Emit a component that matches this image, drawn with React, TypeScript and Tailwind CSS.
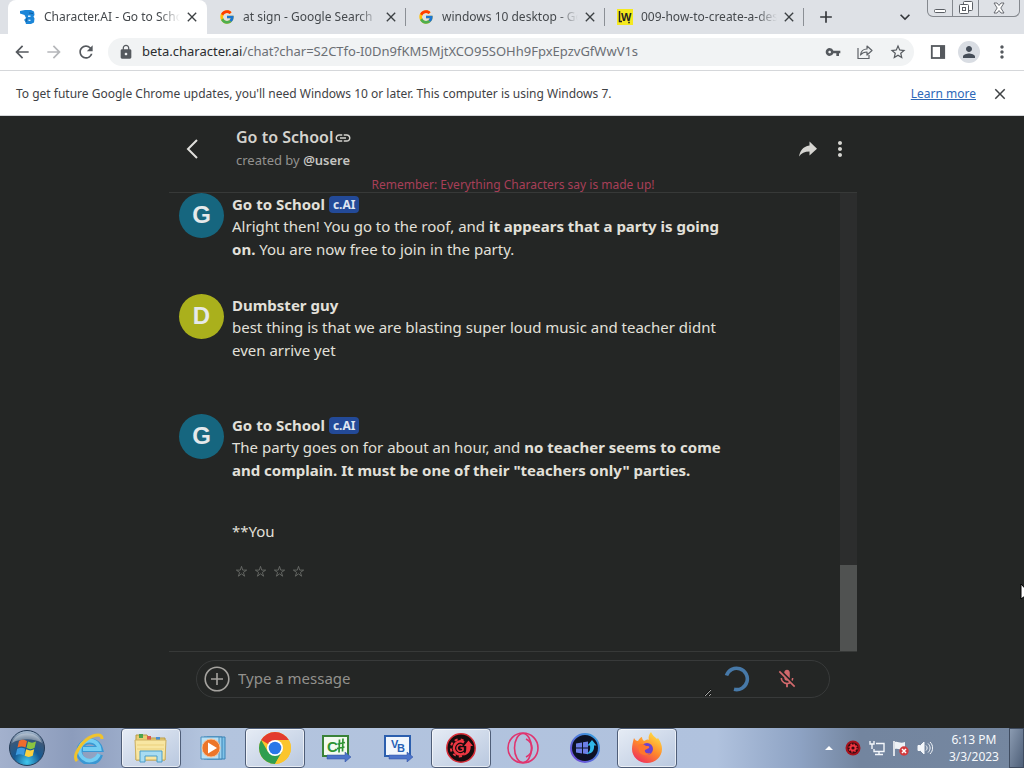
import { ReactNode } from "react";
import { FcGoogle } from "react-icons/fc";
import { IoMdShareAlt } from "react-icons/io";
import {
  MdAdd,
  MdArrowBack,
  MdArrowForward,
  MdClose,
  MdExpandMore,
  MdLink,
  MdLock,
  MdMicOff,
  MdMoreVert,
  MdPerson,
  MdRefresh,
  MdStarBorder,
  MdVpnKey,
} from "react-icons/md";

type IconProps = { className?: string };

const CharacterIcon = () => (
  <svg viewBox="0 0 16 16" className="h-4 w-4">
    <path d="M0 2l5-1h6l3 1.500.500 3.500-1 1.500 1 2-.500 4-3 1.500H6l-1-3-1-1 2-2-1.500-3L0 4.500z" fill="#1c86d8" />
    <path d="M8 6.500h2.500V8H8zM8.500 10.500l2 .300V12h-2z" fill="#d6ecfb" />
    <path d="M9 4l4 .500M6 13l1-4" stroke="#12548f" strokeWidth="0.800" />
  </svg>
);

const WikiFavicon = () => (
  <svg viewBox="0 0 16 16" className="h-4 w-4">
    <rect width="16" height="16" fill="#f5e91e" />
    <path d="M2.500 2v10.500h2.500" stroke="#222" strokeWidth="1.500" fill="none" />
    <text x="4" y="11.500" fontSize="11" fontWeight="bold" fontFamily="Liberation Sans" fill="#222">
      W
    </text>
    <circle cx="12" cy="13.500" r="0.900" fill="#222" />
  </svg>
);

const ShareIcon = () => (
  <svg viewBox="0 0 16 16" className="h-4 w-4" fill="none" stroke="#5f6368" strokeWidth="1.200">
    <path d="M1 4v10.500h11V11" />
    <path d="M3.500 11c.5-4 2.500-6 6.500-6V2l5 4.500-5 4.500V8C7 8 5 9 3.500 11z" strokeLinejoin="round" />
  </svg>
);

const SidePanelIcon = () => (
  <svg viewBox="0 0 16 16" className="h-4 w-4">
    <rect x="1.800" y="2" width="12.400" height="12" fill="none" stroke="#55595e" strokeWidth="1.800" />
    <path d="M10 2h4v12h-4z" fill="#55595e" />
  </svg>
);

const BackIcon = ({ className }: IconProps) => (
  <svg viewBox="0 0 12 20" className={className} fill="none" stroke="#e0dfdc" strokeWidth="2">
    <path d="M11 1L2 10l9 9" />
  </svg>
);

const PlusCircleIcon = ({ className }: IconProps) => (
  <svg viewBox="0 0 26 26" className={className} fill="none" stroke="#a5a39f" strokeWidth="1.600">
    <circle cx="13" cy="13" r="11.800" />
    <path d="M13 7v12M7 13h12" />
  </svg>
);

const SpinnerIcon = ({ className }: IconProps) => (
  <svg viewBox="0 0 26 26" className={className} fill="none" stroke="#4779a8" strokeWidth="3.600">
    <path d="M2.500 9.500A10.700 10.700 0 1 1 10 23.300" />
  </svg>
);

const StartOrb = () => (
  <svg viewBox="0 0 38 38" className="h-[38px] w-[38px]">
    <defs>
      <radialGradient id="orb" cx="50%" cy="90%" r="85%">
        <stop offset="0" stopColor="#41c8ee" />
        <stop offset="0.450" stopColor="#155a94" />
        <stop offset="0.800" stopColor="#3c5878" />
        <stop offset="1" stopColor="#9fb4cb" />
      </radialGradient>
    </defs>
    <circle cx="19" cy="19" r="17.500" fill="url(#orb)" stroke="#253c58" />
    <path d="M11 12c3-2 5-1.500 8 0l-1.500 6.500c-3-1.500-5-1.500-8 0z" fill="#ee6c2d" />
    <path d="M20 12.500c3 1.500 5 1.500 8 0L26.500 19c-3 1.500-5 1.500-8 0z" fill="#8bc440" />
    <path d="M9.200 19.800c3-1.500 5-1.500 8 0l-1.500 6.500c-3-1.500-5-1.500-8 0z" fill="#3c9be0" />
    <path d="M18.200 20.300c3 1.500 5 1.500 8 0l-1.500 6.500c-3 1.500-5 1.500-8 0z" fill="#fbd13f" />
    <path d="M4 14C8 1 30 1 34 14 26 9 12 9 4 14z" fill="#fff" opacity="0.350" />
  </svg>
);

const ExplorerEIcon = () => (
  <svg viewBox="0 0 32 32" className="h-8 w-8" fill="none">
    <path d="M27 22.500A10.500 10.500 0 1 1 27 17H9" stroke="#3a97d3" strokeWidth="6" />
    <path d="M26 22A10 10 0 1 1 26.500 17H10" stroke="#73cdf3" strokeWidth="3.800" />
    <path d="M4 29C-1 24 9 8 20 4c6-2 9-1 9 3" stroke="#f0c32d" strokeWidth="3" />
  </svg>
);

const FolderIcon = () => (
  <svg viewBox="0 0 34 32" className="h-8 w-[34px]">
    <path d="M2 3h11l2 3h16v22H2z" fill="#e8cc72" stroke="#b79a48" />
    <path d="M5 2h4v4H5z" fill="#4ba24d" />
    <path d="M13 4h4v4h-4z" fill="#d95a4e" />
    <path d="M22 5h4v4h-4z" fill="#4a8fd0" />
    <path d="M1 8h31l-1 20H2z" fill="#f8e6a2" stroke="#cdb060" />
    <path d="M3 13h27M3 17h27" stroke="#ebd07c" />
    <path d="M6 30V19h22v11h-5v-6H11v6z" fill="#a8dcf2" stroke="#4b9dc9" />
  </svg>
);

const MediaPlayerIcon = () => (
  <svg viewBox="0 0 28 28" className="h-7 w-7">
    <path d="M8 3h18v22H8z" fill="#7ec2e8" stroke="#3c83b5" />
    <path d="M5 3h18v22H5z" fill="#9bd2ef" stroke="#3c83b5" />
    <path d="M2 3h18v22H2z" fill="#b9e0f4" stroke="#4a90c0" />
    <circle cx="12" cy="14" r="9" fill="#ec762a" stroke="#f7c095" />
    <path d="M9 8.500l9 5.500-9 5.500z" fill="#fff" />
  </svg>
);

const ChromeIcon = () => (
  <svg viewBox="0 0 32 32" className="h-8 w-8">
    <circle cx="16" cy="16" r="16" fill="#fbc52d" />
    <path d="M16 16L2.150 8A16 16 0 0 1 29.850 8H16z" fill="#e33b2e" />
    <path d="M2.150 8A16 16 0 0 0 16 32l6.930-12L16 16 9.070 20z" fill="#2f9e4f" />
    <path d="M16 8h13.850A16 16 0 0 1 16 32l6.930-12z" fill="#fbc52d" />
    <circle cx="16" cy="16" r="8" fill="#fff" />
    <circle cx="16" cy="16" r="6.300" fill="#2877e8" />
  </svg>
);

const CSharpIcon = () => (
  <svg viewBox="0 0 30 28" className="h-7 w-[30px]">
    <path d="M1 2h25v20H1z" fill="#f3faef" stroke="#3a8238" strokeWidth="2" />
    <text x="5" y="18" fontSize="15" fontWeight="bold" fontFamily="Liberation Sans" fill="#2e9433">
      C
    </text>
    <path d="M17.500 5.500l-.500 13M21 4.500l-.500 13M15.500 10l7.500-1.500M15 14.500l7.500-1.500" stroke="#2e9433" strokeWidth="1.700" />
    <path d="M5 21h18v-3l6 5-6 5v-3H5z" fill="#4d74c9" stroke="#2c4fa0" strokeWidth="0.500" />
  </svg>
);

const VisualBasicIcon = () => (
  <svg viewBox="0 0 30 28" className="h-7 w-[30px]">
    <path d="M1 2h25v20H1z" fill="#f2f7fd" stroke="#2c5fae" strokeWidth="2" />
    <text x="7" y="14" fontSize="11" fontWeight="bold" fontFamily="Liberation Sans" fill="#2661b5">
      V
    </text>
    <text x="13" y="18" fontSize="11" fontWeight="bold" fontFamily="Liberation Sans" fill="#2661b5">
      B
    </text>
    <path d="M5 21h18v-3l6 5-6 5v-3H5z" fill="#4d74c9" stroke="#2c4fa0" strokeWidth="0.500" />
  </svg>
);

const GearBoosterIcon = () => (
  <svg viewBox="0 0 30 30" className="h-[30px] w-[30px]">
    <circle cx="15" cy="15" r="14.200" fill="#160c0e" stroke="#d92d38" strokeWidth="1.500" />
    <path
      d="M18 9.500A6.500 6.500 0 1 0 18.500 20"
      fill="none"
      stroke="#ef3742"
      strokeWidth="2.600"
    />
    <path
      d="M17.500 7.500A8.500 8.500 0 1 0 18 22"
      fill="none"
      stroke="#ef3742"
      strokeWidth="2"
      strokeDasharray="3 3"
    />
    <path d="M16.500 12.500a3.300 3.300 0 1 0 .5 4.500v-2h-2.500" fill="none" stroke="#ef3742" strokeWidth="1.600" />
    <path d="M17 22.500c3-2 3.500-5 3.200-9.500H18l4.500-5.500L27 13h-2.300c.3 5-2.200 9-7.700 9.500z" fill="#ef3742" />
  </svg>
);

const OperaIcon = () => (
  <svg viewBox="0 0 32 32" className="h-8 w-8" fill="none" stroke="#e0346f" strokeWidth="1.600">
    <circle cx="16" cy="16" r="15" />
    <ellipse cx="16" cy="16" rx="8.500" ry="14.500" />
    <path d="M19 7c8 4 8 14 0 18" />
  </svg>
);

const WindowsUpdateIcon = () => (
  <svg viewBox="0 0 32 32" className="h-8 w-8">
    <defs>
      <linearGradient id="ring" x1="1" y1="0" x2="0" y2="1">
        <stop offset="0" stopColor="#33a5de" />
        <stop offset="1" stopColor="#7443d8" />
      </linearGradient>
    </defs>
    <circle cx="16" cy="16" r="14" fill="#0d1225" stroke="url(#ring)" strokeWidth="2" />
    <path d="M7 11.500l6-1v5H7zM7 16.500h6v5l-6-1zM14 10.300l5-.800v6h-5zM14 16.500h5v5.800l-5-.800z" fill="#6d7fe6" />
    <path d="M17 21.500c4-1 4.500-4 4-8h-2.500L23 8l4.500 5.500H25c.5 5-2 9-8 8z" fill="#2fb8e8" />
  </svg>
);

const FirefoxIcon = () => (
  <svg viewBox="0 0 32 32" className="h-8 w-8">
    <defs>
      <linearGradient id="fox" x1="0.800" y1="0" x2="0.200" y2="1">
        <stop offset="0" stopColor="#ffe445" />
        <stop offset="0.500" stopColor="#ff8a2b" />
        <stop offset="1" stopColor="#ee2a5f" />
      </linearGradient>
    </defs>
    <path
      d="M3 6c1 2 2 3 4 3 1-2 3-4 4-4 0 2 1 3 2 4 2-1 4-2 5-1-1-3 0-6 2-8 1 3 4 5 6 7l1-1c3 4 4 8 4 11 0 8-7 14-15 14S1 25 1 17c0-4 1-7 2-11z"
      fill="url(#fox)"
    />
    <circle cx="16" cy="17" r="6" fill="#6c42cf" />
    <path d="M7 13c3-2 6-1 8 1 2 0 4 0 3 2l-4 2c-1 3 3 4 6 3-4 4-11 2-12-2z" fill="#ff762d" />
  </svg>
);

const tabs = [
  { title: "Character.AI - Go to School", icon: <CharacterIcon />, active: true },
  { title: "at sign - Google Search", icon: <FcGoogle className="h-4 w-4" /> },
  { title: "windows 10 desktop - Google Search", icon: <FcGoogle className="h-4 w-4" /> },
  { title: "009-how-to-create-a-desktop", icon: <WikiFavicon /> },
];

const Tab = ({ title, icon, active }: { title: string; icon: ReactNode; active?: boolean }) => (
  <div
    className={
      active
        ? "flex h-full w-[199px] items-center rounded-t-lg bg-white pl-3"
        : "flex h-full w-[199px] items-center pl-3"
    }
  >
    <div className="shrink-0">{icon}</div>
    <a
      href="#"
      className="ml-2 w-[136px] shrink-0 overflow-hidden mask-r-from-85% text-xs whitespace-nowrap text-[#45494d]"
    >
      {title}
    </a>
    <button aria-label="Close tab" className="ml-1 shrink-0">
      <MdClose className="h-4 w-4 text-[#3c4043]" />
    </button>
    <div className={active ? "hidden" : "ml-1.5 h-[18px] w-px shrink-0 bg-[#8b8f95]"} />
  </div>
);

const TabStrip = () => (
  <div className="flex h-[34px] bg-[#dee1e6] pr-1 pl-2">
    <div className="flex h-full items-end">
      {tabs.map((tab) => (
        <Tab key={tab.title} {...tab} />
      ))}
    </div>
    <button aria-label="New tab" className="ml-3">
      <MdAdd className="h-5 w-5 text-[#34373b]" />
    </button>
    <button aria-label="Search tabs" className="mr-3 ml-auto">
      <MdExpandMore className="h-5 w-5 text-[#34373b]" />
    </button>
    <div className="flex h-[17px] divide-x divide-[#84888e] rounded-b-md border border-t-0 border-[#84888e] text-[#5b5f65]">
      <button aria-label="Minimize" className="flex w-[25px] items-center justify-center">
        <svg viewBox="0 0 12 12" className="h-3 w-3" fill="#fff" stroke="currentColor">
          <rect x="0.500" y="7.500" width="11" height="3" rx="1" />
        </svg>
      </button>
      <button aria-label="Restore" className="flex w-[26px] items-center justify-center">
        <svg viewBox="0 0 14 14" className="h-3.5 w-3.5" fill="#fff" stroke="currentColor">
          <rect x="4.500" y="0.500" width="9" height="9" rx="1" />
          <rect x="0.500" y="3.500" width="9" height="9" rx="1" />
          <rect x="3.500" y="6.500" width="3" height="3" />
        </svg>
      </button>
      <button aria-label="Close" className="flex w-10 items-center justify-center">
        <svg viewBox="0 0 12 12" className="h-3 w-3" fill="#fff" stroke="currentColor" strokeWidth="0.900">
          <path d="M1 1h3l2 2.500L8 1h3L7.800 6 11 11H8L6 8.500 4 11H1l3.200-5z" />
        </svg>
      </button>
    </div>
  </div>
);

const Toolbar = () => (
  <div className="flex h-[37px] items-center border-b border-[#d5d7da] bg-white px-3 text-[#55595e]">
    <button aria-label="Back" className="mr-3">
      <MdArrowBack className="h-5 w-5" />
    </button>
    <button aria-label="Forward" className="mr-3 text-[#b5b7ba]">
      <MdArrowForward className="h-5 w-5" />
    </button>
    <button aria-label="Reload" className="mr-3">
      <MdRefresh className="h-5 w-5" />
    </button>
    <div className="flex h-7 flex-1 items-center gap-4 rounded-full bg-[#f1f3f4] pr-[7px] pl-2.5">
      <MdLock className="h-4 w-4 shrink-0" />
      <a href="#" className="-ml-2 flex-1 text-[13px] text-[#6b6f74]">
        <span className="text-[#2b2d30]">beta.character.ai</span>
        /chat?char=S2CTfo-I0Dn9fKM5MjtXCO95SOHh9FpxEpzvGfWwV1s
      </a>
      <button aria-label="Saved passwords">
        <MdVpnKey className="h-4 w-4" />
      </button>
      <button aria-label="Share this page">
        <ShareIcon />
      </button>
      <button aria-label="Bookmark this page">
        <MdStarBorder className="h-[18px] w-[18px]" />
      </button>
    </div>
    <div className="ml-4 flex items-center gap-3">
      <button aria-label="Side panel">
        <SidePanelIcon />
      </button>
      <button aria-label="Profile" className="rounded-full bg-[#d9dde3] p-0.5">
        <MdPerson className="h-[18px] w-[18px] text-[#454d58]" />
      </button>
      <button aria-label="Chrome menu">
        <MdMoreVert className="h-5 w-5" />
      </button>
    </div>
  </div>
);

const InfoBar = () => (
  <div className="flex h-[45px] items-center border-b border-[#d5d7da] bg-white pt-px pr-[15px] pl-4 text-xs text-[#3f4245]">
    <p>
      To get future Google Chrome updates, you'll need Windows 10 or later. This computer is using
      Windows 7.
    </p>
    <a href="#" className="mr-[15px] ml-auto text-[#2d68b8] underline">
      Learn more
    </a>
    <button aria-label="Dismiss">
      <MdClose className="h-[18px] w-[18px]" />
    </button>
  </div>
);

const ChatHeader = () => (
  <header className="border-b border-[#373938]">
    <div className="flex h-[61px] items-center pt-[5px] pr-[5px] pl-[15px]">
      <button aria-label="Back to chats" className="flex w-[52px] pl-0.5">
        <BackIcon className="h-5 w-3" />
      </button>
      <div className="flex-1 leading-[23px]">
        <h1 className="flex items-center text-base leading-[23px] font-semibold text-[#d4d3ce]">
          Go to School
          <MdLink className="h-[18px] w-[18px]" />
        </h1>
        <p className="text-[13px] text-[#93928f]">
          created by{" "}
          <a href="#" className="font-semibold text-[#c6c5c1]">
            @usere
          </a>
        </p>
      </div>
      <button aria-label="Share chat" className="mr-2">
        <IoMdShareAlt className="h-6 w-6 text-[#d6d5d1]" />
      </button>
      <button aria-label="Chat options">
        <MdMoreVert className="h-6 w-6 text-[#d6d5d1]" />
      </button>
    </div>
    <p className="text-center text-xs leading-[15px] text-[#a83f58]">
      Remember: Everything Characters say is made up!
    </p>
  </header>
);

type MessageProps = {
  author: string;
  color: string;
  bot?: boolean;
  children: ReactNode;
};

const Message = ({ author, color, bot, children }: MessageProps) => (
  <article className="flex gap-2">
    <div
      className={`flex h-[45px] w-[45px] shrink-0 items-center justify-center rounded-full pb-0.5 font-['Liberation_Sans',sans-serif] text-2xl font-bold text-[#e5e9ea] ${color}`}
    >
      {author[0]}
    </div>
    <div className="w-[500px] leading-[23px]">
      <h2 className="flex items-center gap-1 leading-[22px] font-bold">
        {author}
        {bot && (
          <span className="rounded-sm bg-[#234a98] px-1 text-xs leading-[17px] text-[#dfe6f2]">
            c.AI
          </span>
        )}
      </h2>
      {children}
    </div>
  </article>
);

const Chat = () => (
  <main className="relative flex flex-1 flex-col overflow-hidden bg-[#242625] pl-0.5 font-['Noto_Sans',sans-serif] text-[15px] text-[#e2e0da]">
    <div className="mx-auto flex w-full max-w-[688px] flex-1 flex-col">
      <ChatHeader />
      <section className="flex flex-1 border-b border-[#373938]">
        <div className="flex-1 pl-2.5">
          <Message author="Go to School" color="bg-[#16667f]" bot>
            <p>
              Alright then! You go to the roof, and <b>it appears that a party is going on.</b> You
              are now free to join in the party.
            </p>
          </Message>
          <div className="mt-[33px]">
            <Message author="Dumbster guy" color="bg-[#aab01c]">
              <p>
                best thing is that we are blasting super loud music and teacher didnt even arrive yet
              </p>
            </Message>
          </div>
          <div className="mt-[52px]">
            <Message author="Go to School" color="bg-[#16667f]" bot>
              <p>
                The party goes on for about an hour, and{" "}
                <b>
                  no teacher seems to come and complain. It must be one of their "teachers only"
                  parties.
                </b>
              </p>
              <p className="mt-[38px]">**You</p>
              <div className="mt-[21px] flex gap-1 pl-0.5 text-[#6d6f6c]">
                {[1, 2, 3, 4].map((star) => (
                  <button key={star} aria-label={`Rate ${star}`}>
                    <svg viewBox="0 0 16 16" className="h-[15px] w-[15px]" fill="none" stroke="currentColor">
                      <path d="M8 2.500l1.300 4h4.200L10 9l1.300 4L8 10.500 4.700 13 6 9 2.500 6.500h4.200z" strokeWidth="0.900" />
                    </svg>
                  </button>
                ))}
              </div>
            </Message>
          </div>
        </div>
        <div className="flex w-[17px] flex-col justify-end bg-[#2c2d2d]">
          <div className="h-[86px] bg-[#505251]" />
        </div>
      </section>
      <form className="mx-[27px] mt-2 mb-[30px] flex h-[38px] items-center rounded-full border border-[#383a3a] pr-[31px] pl-[7px]">
        <button type="button" aria-label="Add attachment">
          <PlusCircleIcon className="h-[26px] w-[26px]" />
        </button>
        <textarea
          aria-label="Message"
          placeholder="Type a message"
          className="ml-2 h-9 flex-1 resize-y bg-transparent pt-1.5 leading-[23px] scheme-dark placeholder:text-[#92918d]"
        />
        <SpinnerIcon className="ml-3 h-[26px] w-[26px]" />
        <button type="button" aria-label="Microphone off" className="ml-[26px]">
          <MdMicOff className="h-[22px] w-[22px] text-[#d2696c]" />
        </button>
      </form>
    </div>
    <svg viewBox="0 0 12 20" className="absolute top-[467px] -right-2 h-5 w-3">
      <path d="M1 1v15l4-3 2 6 2-1-2-5h5z" fill="#fff" stroke="#000" />
    </svg>
  </main>
);

const apps = [
  { name: "Internet Explorer", icon: <ExplorerEIcon /> },
  { name: "File Explorer", icon: <FolderIcon />, open: true },
  { name: "Media Player", icon: <MediaPlayerIcon /> },
  { name: "Chrome", icon: <ChromeIcon />, open: true },
  { name: "C#", icon: <CSharpIcon /> },
  { name: "Visual Basic", icon: <VisualBasicIcon /> },
  { name: "Driver Booster", icon: <GearBoosterIcon />, open: true },
  { name: "Opera", icon: <OperaIcon /> },
  { name: "Windows Update", icon: <WindowsUpdateIcon /> },
  { name: "Firefox", icon: <FirefoxIcon />, open: true },
];

const TrayIcons = () => (
  <div className="flex items-center gap-2">
    <svg viewBox="0 0 8 4" className="mr-1 h-1 w-2">
      <path d="M0 4l4-4 4 4z" fill="#fff" />
    </svg>
    <svg viewBox="0 0 16 16" className="h-4 w-4">
      <circle cx="8" cy="8" r="7.500" fill="#a9121c" />
      <circle cx="8" cy="8" r="5.500" fill="#3a0b10" />
      <circle cx="8" cy="8" r="2.500" fill="none" stroke="#ef3540" strokeWidth="1.800" />
      <circle cx="8" cy="8" r="4" fill="none" stroke="#ef3540" strokeWidth="1.200" strokeDasharray="1.600 1.540" />
    </svg>
    <svg viewBox="0 0 16 16" className="h-4 w-4" fill="none" stroke="#f3f6fa" strokeWidth="1.400">
      <path d="M7 3.500h8v8H5V9M10 11.500V14M6 14.500h8M1 1v3h4V1M3 4v5" />
    </svg>
    <svg viewBox="0 0 16 16" className="h-4 w-4">
      <path d="M1 1v15" stroke="#fff" strokeWidth="1.500" />
      <path d="M2 2c3-1 5 2 10 0v7c-4 2-6-1-10 0z" fill="#eef2f6" />
      <circle cx="11" cy="11" r="4.700" fill="#d23b3e" />
      <path d="M9 9l4 4M13 9l-4 4" stroke="#fff" strokeWidth="1.500" />
    </svg>
    <svg viewBox="0 0 16 16" className="h-4 w-4" fill="none" stroke="#f3f6fa">
      <path d="M1 5.500h2.500L7 2v12l-3.500-3.500H1z" fill="#f3f6fa" />
      <path d="M9 5.500c1.500 1.500 1.500 3.500 0 5M11 3.500c2.800 2.800 2.800 6.200 0 9M13 2c3.500 3.500 3.500 8.500 0 12" />
    </svg>
  </div>
);

const Taskbar = () => (
  <footer className="flex h-10 items-center bg-[linear-gradient(to_right,#a3b1cd,#8c9cbc_7%,#b3c4de_20%,#b0c2de_70%,#8ea3c4_78%,#73859f_84%,#7587a0)]">
    <button aria-label="Start" className="flex w-[59px] justify-center pr-1.5">
      <StartOrb />
    </button>
    <nav className="flex h-full flex-1 gap-0.5">
      {apps.map((app) => (
        <button
          key={app.name}
          aria-label={app.name}
          className={
            app.open
              ? "flex w-[60px] items-center justify-center rounded-sm border border-[#4f5e78] bg-linear-to-br from-[#e6ecf5] to-[#b9c8df] inset-ring inset-ring-white/60"
              : "flex w-[60px] items-center justify-center"
          }
        >
          {app.icon}
        </button>
      ))}
    </nav>
    <TrayIcons />
    <div className="ml-4 text-center text-xs leading-[17px] text-[#f6f8fb]">
      <p>6:13 PM</p>
      <p>3/3/2023</p>
    </div>
    <button
      aria-label="Show desktop"
      className="ml-2.5 h-full w-[15px] border border-[#3f4c60] bg-linear-to-br from-[#8b9bb1] to-[#4f6079]"
    />
  </footer>
);

const App = () => (
  <div className="flex min-h-screen flex-col overflow-hidden bg-[#242625] font-['Noto_Sans',sans-serif]">
    <TabStrip />
    <Toolbar />
    <InfoBar />
    <Chat />
    <Taskbar />
  </div>
);

export default App;
